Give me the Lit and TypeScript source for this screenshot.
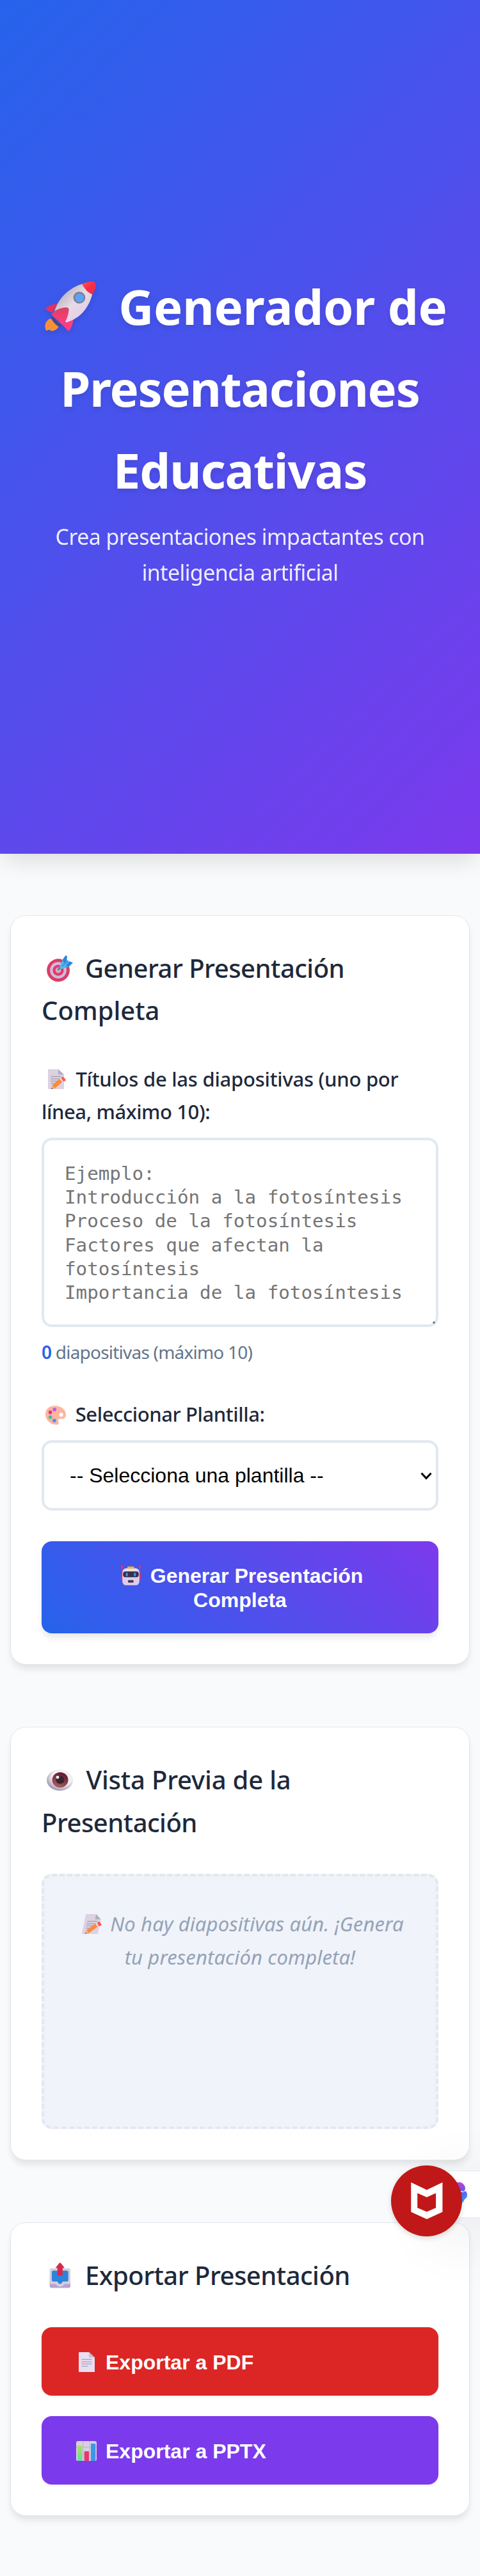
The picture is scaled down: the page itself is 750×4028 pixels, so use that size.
import { LitElement, html, css } from "lit";
import { customElement } from "lit/decorators.js";

const rocket = html`<svg class="rocket" viewBox="58 62 237 233">
  <defs>
    <linearGradient id="r1" x1="0" y1="0" x2="1" y2="1"><stop offset="0.2" stop-color="#b9b3bb" /><stop offset="0.5" stop-color="#e6dbe9" /><stop offset="1" stop-color="#dcc6e2" /></linearGradient>
    <linearGradient id="r2" x1="0" y1="0" x2="0" y2="1"><stop offset="0" stop-color="#d9415f" /><stop offset="1" stop-color="#ff3d85" /></linearGradient>
    <linearGradient id="r3" x1="0" y1="0" x2="1" y2="1"><stop offset="0" stop-color="#ff5a4a" /><stop offset="0.5" stop-color="#fb2c48" /><stop offset="1" stop-color="#e0304a" /></linearGradient>
  </defs>
  <path d="M62 290c-8-18-4-38 14-52c16-6 38 14 46 32c-2 12-20 26-38 23l-3-5l-8 1c-5 3-8 5-11 1z" fill="#f6913a" />
  <path d="M90 224l44 46l-10 4c-14-6-30-24-36-38z" fill="#4a4580" />
  <path d="M64 184c14-10 34-17 54-17l-24 39c-8 3-22-4-30-13c-2-3-2-6 0-9z" fill="#e0335f" />
  <path d="M190 236c0 18-6 38-17 54c-2 4-6 4-9 1l-26-28z" fill="#ff3d80" />
  <path d="M102 203c18-62 66-110 130-129c22 6 40 26 47 48c-20 74-66 118-124 132z" fill="url(#r1)" />
  <path d="M231 74c20-9 38-12 52-11c9 2 12 12 11 24c-2 14-7 26-14 37c-20-8-38-26-49-50z" fill="url(#r3)" />
  <circle cx="218" cy="138" r="28" fill="#857f94" />
  <circle cx="219" cy="139" r="20" fill="#5aa4f5" />
  <path d="M91 211c14-14 42-27 66-27c9 0 14 5 12 14c-4 28-12 50-24 64c-4 3-8 2-11-1l-42-40c-4-4-4-7-1-10z" fill="url(#r2)" />
</svg>`;

const target = html`<svg class="target" viewBox="204 41 123 124">
  <circle cx="258" cy="111" r="54" fill="#dd3b68" />
  <circle cx="258" cy="111" r="39" fill="#cdbcd8" />
  <circle cx="258" cy="111" r="26" fill="#e8386a" />
  <circle cx="258" cy="111" r="13" fill="#c5b1cc" />
  <path d="M258 108l14-14" stroke="#6d6a80" stroke-width="7" stroke-linecap="round" />
  <path d="M264 94l15-33l14-20l7 4l-2 19l18 8l11 4l-17 17l-29 9c-8 5-16 4-17-8z" fill="#52b5ea" />
  <path d="M279 61l14-20l6 4l-1 20l-13 14zM296 86l15-17l16 6l-17 17l-14 2z" fill="#2f83e0" />
  <path d="M277 92l28-28" stroke="#2f83e0" stroke-width="4" />
</svg>`;

const note = (cls: string) => html`<svg class=${cls} viewBox="0 0 84 93">
  <path d="M0 0h48l27 25v68H0z" fill="#dcd2e2" />
  <path d="M48 0l27 25H52q-4 0-4-4z" fill="#b5acba" />
  <path d="M13 34h48M13 45h48M13 55h34M13 66h20" stroke="#9690a0" stroke-width="3" />
  <path d="M15 93l5-19l34-29l13 14l-36 32z" fill="#fb8a3c" />
  <path d="M15 93l5-19l13 16z" fill="#e8b48c" />
  <path d="M15 93l2-7l5 5z" fill="#5a4a58" />
  <path d="M54 45l7-5l12 14l-6 5z" fill="#e2d8ea" />
  <path d="M61 40l6-4q4-2 8 3l8 10q1 4-3 6l-7 3z" fill="#fb5a4c" />
</svg>`;

const palette = html`<svg class="palette" viewBox="33 24 97 90">
  <path fill-rule="evenodd" d="M76 24c32 0 54 18 54 43c0 14-10 20-24 19c-12 0-16 3-12 13c4 9 0 15-8 15C60 114 33 95 33 63c0-23 18-39 43-39zM107 56a10 10 0 1 0 0.100 0z" fill="#fdb4a0" />
  <circle cx="76" cy="42" r="8.500" fill="#b65ce8" />
  <circle cx="56" cy="55" r="8.500" fill="#ec3482" />
  <circle cx="56" cy="78" r="8.500" fill="#46b8a8" />
  <circle cx="75" cy="94" r="8.500" fill="#4594ec" />
</svg>`;

const robot = html`<svg class="robot" viewBox="26 59 96 95">
  <path d="M32 64v62M117 64v62" stroke="#e83060" stroke-width="4" />
  <circle cx="32" cy="64" r="5" fill="#fb3058" /><circle cx="117" cy="64" r="5" fill="#fb3058" />
  <rect x="27" y="94" width="12" height="36" rx="5" fill="#f02f62" /><rect x="109" y="94" width="12" height="36" rx="5" fill="#f02f62" />
  <rect x="33" y="72" width="82" height="82" rx="18" fill="#dfcde8" />
  <path d="M42 76q32-8 64 0v8H42z" fill="#e7dfea" />
  <rect x="57" y="63" width="33" height="10" rx="4" fill="#f7b52a" />
  <rect x="36" y="87" width="76" height="28" rx="12" fill="#392d54" />
  <rect x="50" y="93" width="9" height="18" rx="4.500" fill="#2ba5dd" /><rect x="89" y="93" width="9" height="18" rx="4.500" fill="#2ba5dd" />
  <rect x="60" y="129" width="27" height="12" rx="4" fill="#44385c" />
</svg>`;

const eye = html`<svg class="eye" viewBox="0 0 82 96" preserveAspectRatio="none">
  <defs><radialGradient id="e1" cx="0.6" cy="0.35" r="0.65"><stop offset="0.6" stop-color="#f1f0f2" /><stop offset="1" stop-color="#a698b8" /></radialGradient>
  <linearGradient id="e2" x1="0.7" y1="0" x2="0.3" y2="1"><stop offset="0" stop-color="#5d1230" /><stop offset="1" stop-color="#a8645c" /></linearGradient></defs>
  <ellipse cx="41" cy="48" rx="41" ry="48" fill="url(#e1)" />
  <ellipse cx="42" cy="47" rx="25" ry="35" fill="url(#e2)" />
  <ellipse cx="42" cy="47" rx="13" ry="18" fill="#38242c" />
  <ellipse cx="34" cy="35" rx="5" ry="7" fill="#fff" />
</svg>`;

const tray = html`<svg class="tray" viewBox="50 -6 100 120">
  <rect x="52" y="60" width="98" height="53" rx="8" fill="#b8a2d2" />
  <path d="M60 21h82q8 0 8 8v60q0 6-6 6h-22l-8 8q-13 8-26 0l-8-8H58q-6 0-6-6V29q0-8 8-8z" fill="#d5cfdb" />
  <path d="M70 31h62q8 0 8 8v36q0 8-8 8h-19q-3 11-12 11t-12-11H70q-8 0-8-8V39q0-8 8-8z" fill="#2d84d8" />
  <path d="M101-6q3 0 5 3l15 19q1 3-2 3h-6v35H89V19h-6q-3 0-2-3L96-3q2-3 5-3z" fill="#d92848" />
</svg>`;

const page = html`<svg class="page" viewBox="0 0 75 93">
  <path d="M0 0h48l27 25v68H0z" fill="#e8def2" />
  <path d="M48 0l27 25H52q-4 0-4-4z" fill="#c8bfcc" />
  <path d="M13 34h48M13 45h48M13 55h48M13 66h30" stroke="#9a90a6" stroke-width="3" />
</svg>`;

const chart = html`<svg class="chart" viewBox="0 0 96 93">
  <defs><linearGradient id="c1" x1="0" y1="0" x2="0" y2="1"><stop offset="0" stop-color="#aee05c" /><stop offset="1" stop-color="#5ce09c" /></linearGradient></defs>
  <rect width="96" height="93" rx="8" fill="#d8d0e0" />
  <path d="M0 29h96M0 63h96M32 0v93M64 0v93" stroke="#bdb5c4" stroke-width="3" />
  <rect x="6" y="22" width="22" height="71" rx="3" fill="url(#c1)" />
  <rect x="38" y="48" width="22" height="45" rx="3" fill="#e6396f" />
  <rect x="69" y="12" width="22" height="81" rx="3" fill="#3a98e8" />
</svg>`;

@customElement("app-root")
export class AppRoot extends LitElement {
  static styles = css`
    :host { display: block; position: relative; height: 4028px; overflow: hidden; background: #f9fafc; color: #1e293b; font-family: "Noto Sans", "Open Sans", sans-serif; }
    * { box-sizing: border-box; }
    h1, h2, p { margin: 0; }
    svg { display: inline-block; flex: none; overflow: visible; }
    .line { display: block; white-space: nowrap; }
    header { height: 1334.500px; padding-top: 414.500px; text-align: center; color: #fff; background: linear-gradient(135deg, #2563eb, #7c3aed); box-shadow: 0 20px 30px -6px rgba(0, 0, 0, 0.1); }
    h1 { font-size: 76px; line-height: 128px; font-weight: 700; letter-spacing: -0.200px; text-shadow: 0 4px 8px rgba(0, 0, 0, 0.1); }
    .t2 { letter-spacing: -1.250px; }
    .t3 { letter-spacing: -1.100px; }
    .sub { margin-top: 12.500px; font-size: 34px; line-height: 56.300px; letter-spacing: -0.600px; opacity: 0.9; }
    main { display: flex; flex-direction: column; gap: 97px; padding: 96px 16px 0; }
    section { padding: 48px; background: #fff; border: 1px solid #e2e8f0; border-radius: 24px; box-shadow: 0 8px 12px -2px rgba(0, 0, 0, 0.1); }
    h2 { margin-bottom: 47px; padding-top: 1px; font-size: 40px; line-height: 66.560px; font-weight: 500; letter-spacing: -0.520px; }
    .s0 { letter-spacing: 0; }
    .s1 { letter-spacing: -0.170px; }
    .label { margin-bottom: 15px; padding-top: 1px; font-size: 31px; line-height: 51.200px; font-weight: 500; letter-spacing: -0.250px; }
    .s2 { letter-spacing: -0.400px; }
    textarea { display: block; width: 100%; height: 296px; padding: 33.500px 32px 0; border: 4px solid #e2e8f0; border-radius: 16px; resize: none; overflow: hidden; background: #fff; font: 29.230px/37.330px "DejaVu Sans Mono", monospace; }
    textarea::placeholder { color: #757575; }
    .count { margin: 16px 0 48px; font-size: 28px; line-height: 46.080px; letter-spacing: -0.780px; color: #64748b; }
    .count b { color: #2563eb; font-weight: 600; }
    .select { display: flex; align-items: center; justify-content: space-between; height: 110px; padding: 1px 6px 0 40px; border: 4px solid #e2e8f0; border-radius: 16px; color: #000; font: 32px/37px "Liberation Sans", sans-serif; }
    .chev { width: 18px; height: 12px; }
    button { display: block; width: 100%; padding: 0; border: 0; border-radius: 16px; color: #fff; font: bold 32px/38px "Liberation Sans", sans-serif; }
    .go { height: 144px; margin-top: 48px; padding-top: 2px; background: linear-gradient(45deg, #2563eb, #7c3aed); box-shadow: 0 8px 12px -2px rgba(0, 0, 0, 0.1); }
    .exp { height: 107px; padding-top: 2px; text-align: left; box-shadow: 0 2px 4px rgba(0, 0, 0, 0.06); }
    .pdf { background: #dc2626; }
    .pptx { margin-top: 32px; background: #7c3aed; }
    .preview { height: 399px; padding: 49px 48px 0; border: 4px dashed #e2e8f0; border-radius: 16px; background: #f0f3f9; color: #94a3b8; font-size: 31px; line-height: 51.200px; font-style: italic; text-align: center; letter-spacing: 0.120px; }
    .rocket { width: 80px; height: 78px; margin: 0 35px 0 19px; vertical-align: -10.500px; filter: drop-shadow(0 4px 4px rgba(0, 0, 0, 0.1)); }
    .target { width: 41px; height: 41px; margin: 0 19px 0 8px; vertical-align: -6px; }
    .note { width: 28px; height: 31px; margin: 0 15.400px 0 10px; vertical-align: -4.500px; }
    .slant { width: 28px; height: 31px; margin: 0 13px 0 12px; vertical-align: -4px; transform: skewX(-12deg); }
    .palette { width: 32px; height: 30px; margin: 0 14.700px 0 6px; vertical-align: -5px; }
    .robot { width: 31px; height: 31px; margin: 0 14.800px 0 6.400px; vertical-align: -4px; }
    .eye { width: 41px; height: 33px; margin: 0 20.500px 0 8px; vertical-align: -2px; }
    .tray { width: 33px; height: 40px; margin: 0 23px 0 12px; vertical-align: -5px; }
    .page { width: 25px; height: 31px; margin: 0 17px 0 58px; vertical-align: -4px; }
    .chart { width: 32px; height: 31px; margin: 0 14px 0 54px; vertical-align: -4px; }
    .grip { position: absolute; left: 676px; top: 2066px; width: 4px; height: 4px; }
    .tab { position: absolute; left: 690px; top: 3394px; width: 80px; height: 74px; border: 1px solid #e7e9ed; border-radius: 12px; background: #fff; box-shadow: 0 20px 90px 20px rgba(0, 0, 0, 0.06); }
    .brain { position: absolute; left: 700px; top: 3411px; width: 30px; height: 38px; }
    .badge { position: absolute; left: 610.500px; top: 3386px; width: 111px; height: 111px; border-radius: 50%; box-shadow: 0 3px 8px rgba(0, 0, 0, 0.14); }
  `;

  render() {
    return html`
      <header>
        <h1>
          <span class="line">${rocket}Generador de</span>
          <span class="line t2">Presentaciones</span>
          <span class="line t3">Educativas</span>
        </h1>
        <p class="sub"><span class="line">Crea presentaciones impactantes con</span><span class="line">inteligencia artificial</span></p>
      </header>
      <main>
        <section>
          <h2><span class="line">${target}Generar Presentación</span><span class="line s0">Completa</span></h2>
          <div class="label"><span class="line">${note("note")}Títulos de las diapositivas (uno por</span><span class="line s2">línea, máximo 10):</span></div>
          <textarea placeholder=${"Ejemplo:\nIntroducción a la fotosíntesis\nProceso de la fotosíntesis\nFactores que afectan la fotosíntesis\nImportancia de la fotosíntesis"}></textarea>
          <div class="count"><b>0</b> diapositivas (máximo 10)</div>
          <div class="label"><span class="line s2">${palette}Seleccionar Plantilla:</span></div>
          <div class="select"><span>-- Selecciona una plantilla --</span>
            <svg class="chev" viewBox="0 0 18 12"><path d="M1.500 1.500L9 9.500L16.500 1.500" fill="none" stroke="#000" stroke-width="3" /></svg>
          </div>
          <button class="go"><span class="line">${robot}Generar Presentación</span><span class="line">Completa</span></button>
        </section>
        <section>
          <h2><span class="line s1">${eye}Vista Previa de la</span><span class="line">Presentación</span></h2>
          <div class="preview"><span class="line">${note("slant")}No hay diapositivas aún. ¡Genera</span><span class="line">tu presentación completa!</span></div>
        </section>
        <section>
          <h2><span class="line">${tray}Exportar Presentación</span></h2>
          <button class="exp pdf"><span class="line">${page}Exportar a PDF</span></button>
          <button class="exp pptx"><span class="line">${chart}Exportar a PPTX</span></button>
        </section>
      </main>
      <svg class="grip" viewBox="0 0 4 4"><path d="M2 0v4M0 2h4" stroke="#555" stroke-width="1.200" /></svg>
      <div class="tab"></div>
      <svg class="brain" viewBox="0 0 30 38">
        <defs><linearGradient id="b1" x1="0" y1="0" x2="0" y2="1"><stop offset="0" stop-color="#c23fd8" /><stop offset="0.450" stop-color="#5b63f2" /><stop offset="1" stop-color="#2bb4ff" /></linearGradient></defs>
        <path d="M12 2q10-3 14 5q2 4 0 7q4 3 4 7q0 5-4 7q-2 5-5 7q-7 1-9-6z" fill="url(#b1)" />
        <path d="M20 15q4 3 7-1" fill="none" stroke="#fff" stroke-width="1.200" />
      </svg>
      <svg class="badge" viewBox="151 108 334 334">
        <circle cx="318" cy="275" r="167" fill="#c01818" />
        <path fill-rule="evenodd" fill="#fff" d="M245 188l74 35l74-35v139l-74 34l-74-34zM275 238v69l44 19l43-19v-69l-43 20z" />
        <path d="M319 223v35M319 326v35" stroke="#f3c9c9" stroke-width="1.500" />
      </svg>
    `;
  }
}
